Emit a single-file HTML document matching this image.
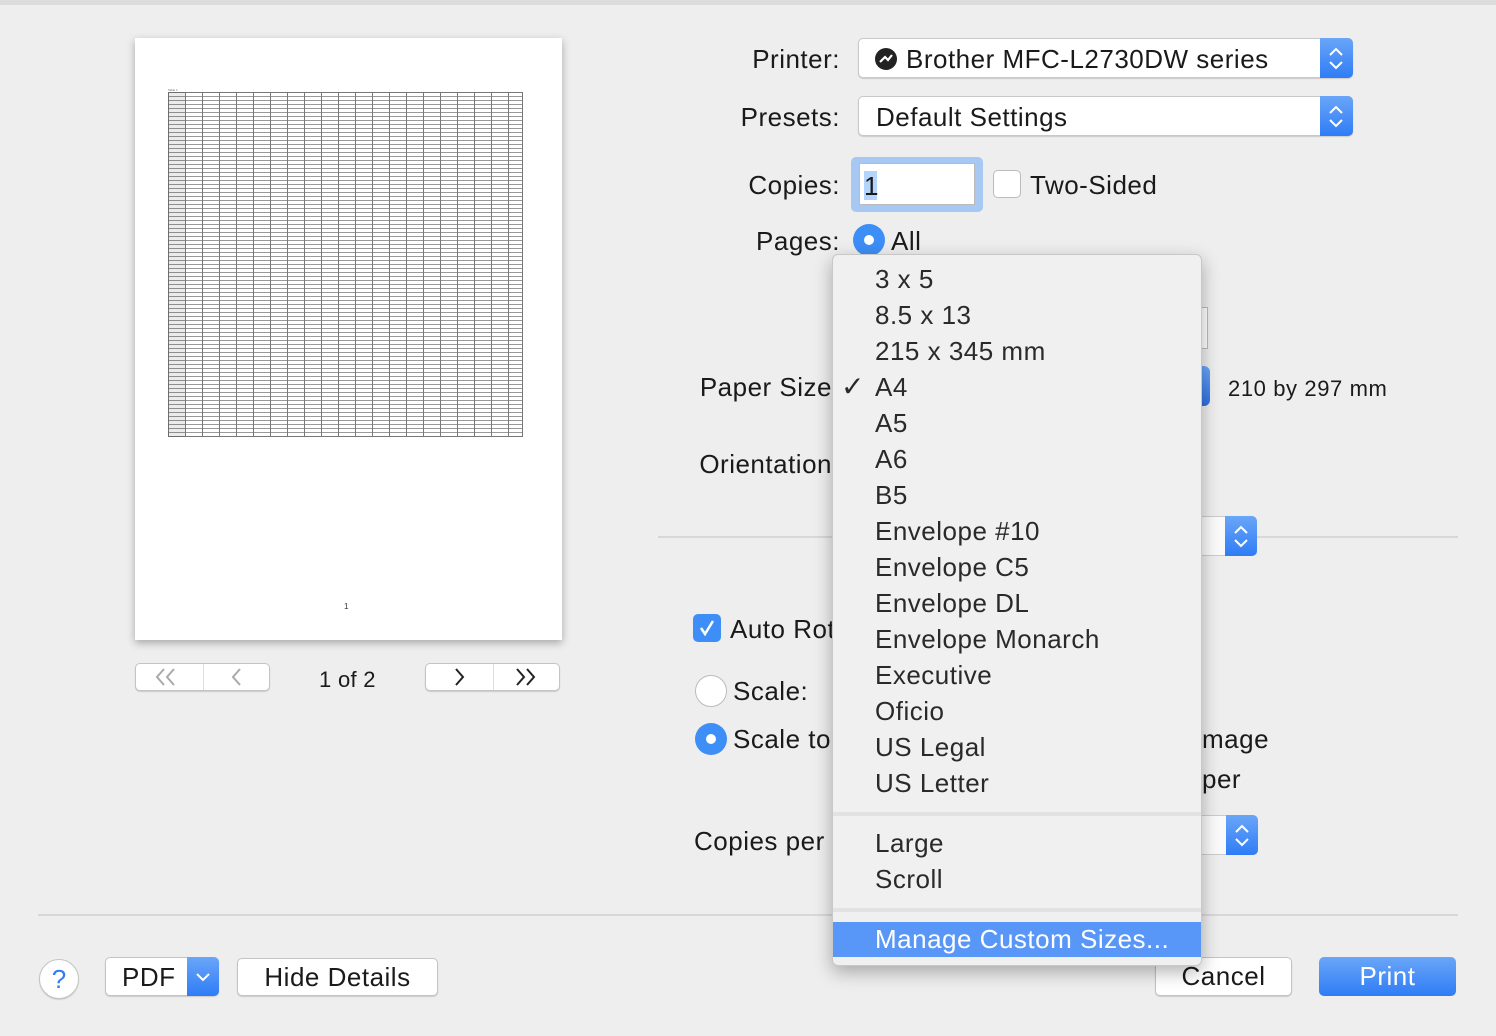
<!DOCTYPE html>
<html><head><meta charset="utf-8">
<style>
*{margin:0;padding:0;box-sizing:border-box}
body{width:1496px;height:1036px;background:#eeeeee;position:relative;overflow:hidden;font-family:"Liberation Sans",sans-serif;color:#1a1a1a}
.a{position:absolute}
.t{position:absolute;font-size:26px;line-height:30px;white-space:nowrap;letter-spacing:0.5px}
.r{text-align:right}
.pop{position:absolute;background:#fff;border:1px solid #c8c8c8;border-radius:5px;box-shadow:0 1px 1px rgba(0,0,0,.15)}
.step{position:absolute;background:linear-gradient(#6aa6f8,#2f7cf6);border-radius:0 5px 5px 0}
.btn{position:absolute;background:#fff;border:1px solid #c4c4c4;border-radius:5px;box-shadow:0 1px 1px rgba(0,0,0,.15);font-size:26px;letter-spacing:0.5px;text-align:center}
.mi{position:absolute;left:875px;font-size:26px;line-height:30px;color:#2a2a2a;white-space:nowrap;letter-spacing:0.5px}
</style></head><body>
<div class="a" style="left:0;top:0;width:1496px;height:5px;background:#dcdcdc"></div>

<!-- preview page -->
<div class="a" style="left:135px;top:38px;width:427px;height:602px;background:#fff;box-shadow:0 3px 8px rgba(0,0,0,.3)"></div>
<div class="a" style="left:168px;top:92px;width:355px;height:345px;border:1px solid #777;background:
repeating-linear-gradient(90deg,transparent 0,transparent 16px,#777 16px,#777 17px),
repeating-linear-gradient(180deg,transparent 0,transparent 3px,#999 3px,#999 4px);"></div>
<div class="a" style="left:168px;top:92px;width:17px;height:345px;background:rgba(0,0,0,.08)"></div>
<div class="a" style="left:168px;top:88px;font-size:3px;color:#666">Table 1</div>
<div class="a" style="left:344px;top:602px;font-size:8px;color:#333">1</div>

<!-- nav -->
<div class="btn" style="left:135px;top:663px;width:135px;height:28px"></div>
<div class="a" style="left:203px;top:664px;width:1px;height:26px;background:#ddd"></div>
<svg class="a" style="left:135px;top:663px" width="135" height="28"><path d="M29 6l-7 8 7 8M39 6l-7 8 7 8M105 6l-7 8 7 8" stroke="#aaa" stroke-width="2" fill="none"/></svg>
<div class="t" style="left:319px;top:665px;font-size:22px;letter-spacing:0.3px">1 of 2</div>
<div class="btn" style="left:425px;top:663px;width:135px;height:28px"></div>
<div class="a" style="left:493px;top:664px;width:1px;height:26px;background:#ddd"></div>
<svg class="a" style="left:425px;top:663px" width="135" height="28"><path d="M31 6l7 8-7 8M92 6l7 8-7 8M102 6l7 8-7 8" stroke="#222" stroke-width="2" fill="none"/></svg>

<!-- labels -->
<div class="t r" style="left:600px;width:240px;top:44px">Printer:</div>
<div class="t r" style="left:600px;width:240px;top:102px">Presets:</div>
<div class="t r" style="left:600px;width:240px;top:170px">Copies:</div>
<div class="t r" style="left:600px;width:240px;top:226px">Pages:</div>

<div class="pop" style="left:858px;top:38px;width:495px;height:40px"></div>
<div class="step" style="left:1320px;top:38px;width:33px;height:40px"></div>
<svg class="a" style="left:1320px;top:38px" width="33" height="40"><path d="M10 17l6-6 6 6M10 24l6 6 6-6" stroke="#fff" stroke-width="2" fill="none"/></svg>
<div class="a" style="left:875px;top:48px;width:22px;height:22px;border-radius:50%;background:#222"></div>
<svg class="a" style="left:875px;top:48px" width="22" height="22"><path d="M5 14l5-5 3 3 4-5" stroke="#fff" stroke-width="2.2" fill="none"/></svg>
<div class="t" style="left:906px;top:44px">Brother MFC-L2730DW series</div>

<div class="pop" style="left:858px;top:96px;width:495px;height:40px"></div>
<div class="step" style="left:1320px;top:96px;width:33px;height:40px"></div>
<svg class="a" style="left:1320px;top:96px" width="33" height="40"><path d="M10 17l6-6 6 6M10 24l6 6 6-6" stroke="#fff" stroke-width="2" fill="none"/></svg>
<div class="t" style="left:876px;top:102px">Default Settings</div>

<div class="a" style="left:851px;top:157px;width:132px;height:55px;background:#a7c8f3;border-radius:5px"></div>
<div class="a" style="left:859px;top:163px;width:116px;height:42px;background:#fff;border:1px solid #bbb"></div>
<div class="a" style="left:864px;top:171px;width:13px;height:29px;background:#b3d4fc"></div>
<div class="t" style="left:864px;top:171px">1</div>
<div class="a" style="left:993px;top:170px;width:28px;height:28px;background:#fff;border:1px solid #bbb;border-radius:5px"></div>
<div class="t" style="left:1030px;top:170px">Two-Sided</div>

<div class="a" style="left:853px;top:224px;width:32px;height:32px;border-radius:50%;background:#3d8ef7"></div>
<div class="a" style="left:864px;top:235px;width:10px;height:10px;border-radius:50%;background:#fff"></div>
<div class="t" style="left:891px;top:226px">All</div>

<!-- background partial controls -->
<div class="a" style="left:1198px;top:307px;width:10px;height:42px;background:#fff;border:1px solid #bbb;border-left:none"></div>
<div class="a" style="left:1196px;top:366px;width:14px;height:40px;background:linear-gradient(#6aa6f8,#2f6fe0);border-radius:0 6px 6px 0"></div>
<div class="t" style="left:1228px;top:374px;font-size:22px;letter-spacing:0.6px">210 by 297 mm</div>
<div class="t r" style="left:560px;width:272px;top:372px">Paper Size</div>
<div class="t r" style="left:560px;width:272px;top:449px">Orientation</div>
<div class="a" style="left:658px;top:536px;width:800px;height:2px;background:#d8d8d8"></div>
<div class="a" style="left:1200px;top:516px;width:30px;height:40px;background:#fafafa;border:1px solid #ccc"></div>
<div class="step" style="left:1225px;top:516px;width:32px;height:40px"></div>
<svg class="a" style="left:1225px;top:516px" width="32" height="40"><path d="M10 17l6-6 6 6M10 24l6 6 6-6" stroke="#fff" stroke-width="2" fill="none"/></svg>

<div class="a" style="left:693px;top:614px;width:28px;height:28px;background:#3d8ef7;border-radius:5px"></div>
<svg class="a" style="left:693px;top:614px" width="28" height="28"><path d="M8 14l4 6 8-13" stroke="#fff" stroke-width="2.5" fill="none"/></svg>
<div class="t" style="left:730px;top:614px">Auto Rot</div>
<div class="a" style="left:695px;top:675px;width:32px;height:32px;border-radius:50%;background:#fff;border:1px solid #bbb"></div>
<div class="t" style="left:733px;top:676px">Scale:</div>
<div class="a" style="left:695px;top:723px;width:32px;height:32px;border-radius:50%;background:#3d8ef7"></div>
<div class="a" style="left:706px;top:734px;width:10px;height:10px;border-radius:50%;background:#fff"></div>
<div class="t" style="left:733px;top:724px">Scale to</div>
<div class="t" style="left:1202px;top:724px">mage</div>
<div class="t" style="left:1202px;top:764px">per</div>
<div class="t" style="left:694px;top:826px">Copies per</div>
<div class="a" style="left:1200px;top:815px;width:30px;height:40px;background:#fafafa;border:1px solid #ccc"></div>
<div class="step" style="left:1226px;top:815px;width:32px;height:40px"></div>
<svg class="a" style="left:1226px;top:815px" width="32" height="40"><path d="M10 17l6-6 6 6M10 24l6 6 6-6" stroke="#fff" stroke-width="2" fill="none"/></svg>

<!-- bottom -->
<div class="a" style="left:38px;top:914px;width:1420px;height:2px;background:#d8d8d8"></div>
<div class="a" style="left:39px;top:959px;width:40px;height:40px;border-radius:50%;background:#fff;border:1px solid #c4c4c4;box-shadow:0 1px 1px rgba(0,0,0,.15);color:#2f7cf6;font-size:26px;text-align:center;line-height:38px">?</div>
<div class="btn" style="left:105px;top:957px;width:114px;height:39px"></div>
<div class="t" style="left:122px;top:962px">PDF</div>
<div class="a" style="left:187px;top:957px;width:32px;height:39px;background:linear-gradient(#6aa6f8,#2f7cf6);border-radius:0 5px 5px 0"></div>
<svg class="a" style="left:187px;top:957px" width="32" height="39"><path d="M10 17l6 6 6-6" stroke="#fff" stroke-width="2" fill="none"/></svg>
<div class="btn" style="left:237px;top:958px;width:201px;height:38px;line-height:36px">Hide Details</div>
<div class="btn" style="left:1155px;top:957px;width:137px;height:39px;line-height:37px">Cancel</div>
<div class="a" style="left:1319px;top:957px;width:137px;height:39px;border-radius:5px;background:linear-gradient(#6aa6f8,#2f7cf6);color:#fff;font-size:26px;letter-spacing:0.5px;text-align:center;line-height:39px">Print</div>

<!-- menu -->
<div class="a" style="left:832px;top:254px;width:370px;height:712px;background:#f0f0f0;border:1px solid #c8c8c8;border-radius:6px;box-shadow:0 6px 18px rgba(0,0,0,.3)"></div>
<div class="mi" style="top:264px">3 x 5</div>
<div class="mi" style="top:300px">8.5 x 13</div>
<div class="mi" style="top:336px">215 x 345 mm</div>
<div class="mi" style="top:372px;left:841px;font-size:28px">&#x2713;</div>
<div class="mi" style="top:372px">A4</div>
<div class="mi" style="top:408px">A5</div>
<div class="mi" style="top:444px">A6</div>
<div class="mi" style="top:480px">B5</div>
<div class="mi" style="top:516px">Envelope #10</div>
<div class="mi" style="top:552px">Envelope C5</div>
<div class="mi" style="top:588px">Envelope DL</div>
<div class="mi" style="top:624px">Envelope Monarch</div>
<div class="mi" style="top:660px">Executive</div>
<div class="mi" style="top:696px">Oficio</div>
<div class="mi" style="top:732px">US Legal</div>
<div class="mi" style="top:768px">US Letter</div>
<div class="a" style="left:833px;top:812px;width:368px;height:4px;background:#e2e2e2"></div>
<div class="mi" style="top:828px">Large</div>
<div class="mi" style="top:864px">Scroll</div>
<div class="a" style="left:833px;top:908px;width:368px;height:4px;background:#e2e2e2"></div>
<div class="a" style="left:833px;top:922px;width:368px;height:35px;background:#5897f7"></div>
<div class="mi" style="top:924px;color:#fff">Manage Custom Sizes...</div>
</body></html>
